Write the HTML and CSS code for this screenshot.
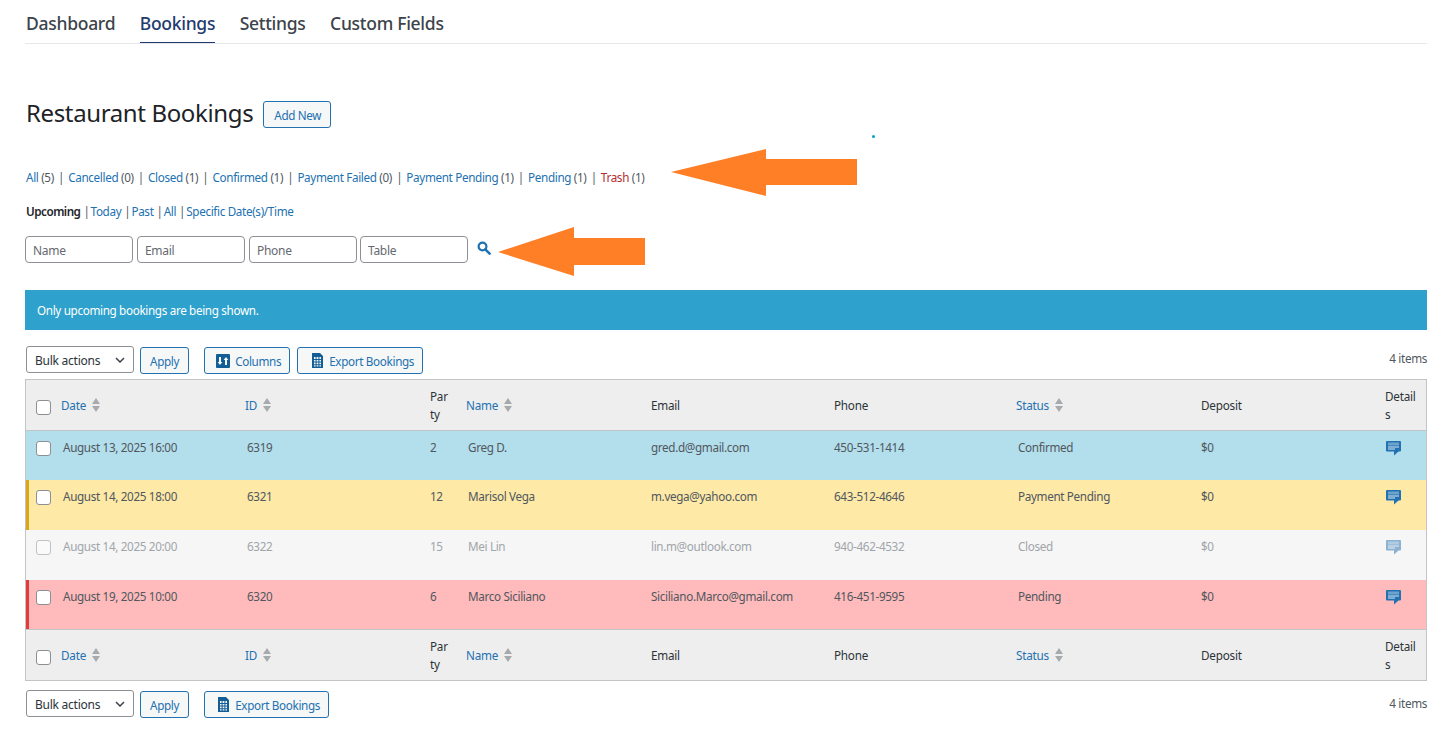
FILE: index.html
```html
<!DOCTYPE html>
<html lang="en">
  <head>
    <meta charset="UTF-8" />
    <title>Restaurant Bookings</title>
    <link rel="stylesheet" href="styles.css">
  </head>
  <body>
    <svg width="0" height="0" class="defs">
      <symbol id="ico-search" viewBox="0 0 14 14">
        <circle cx="5.500" cy="5.500" r="3.900" fill="none" stroke="currentColor" stroke-width="2.200" />
        <path d="M8.300 8.300 12.600 12.600" stroke="currentColor" stroke-width="2.600" stroke-linecap="round" />
      </symbol>
      <symbol id="ico-columns" viewBox="0 0 14 14">
        <path fill="currentColor" fill-rule="evenodd" d="M1 0h12a1 1 0 0 1 1 1v12a1 1 0 0 1-1 1H1a1 1 0 0 1-1-1V1a1 1 0 0 1 1-1zM3 3v5H1.600L4 11l2.400-3H5V3zM9 11h2V6h1.400L10 3 7.600 6H9z" />
      </symbol>
      <symbol id="ico-sheet" viewBox="0 0 13 15">
        <path fill="currentColor" fill-rule="evenodd" d="M1 0h8l3 3v12H1zM3 4v2h1.600V4zM5.600 4v2h1.800V4zM8.400 4v2H10V4zM3 7v1.600h1.600V7zM5.600 7v1.600h1.800V7zM8.400 7v1.600H10V7zM3 9.600v1.600h1.600V9.600zM5.600 9.600v1.600h1.800V9.600zM8.400 9.600v1.600H10V9.600zM3 12.200v1.200h1.600v-1.200zM5.600 12.200v1.200h1.800v-1.200zM8.400 12.200v1.200H10v-1.200z" />
      </symbol>
      <symbol id="ico-comment" viewBox="0 0 15 15">
        <path fill="currentColor" d="M1 0h13a1 1 0 0 1 1 1v8.500a1 1 0 0 1-1 1h-1.500L8 14.500v-4H1a1 1 0 0 1-1-1V1a1 1 0 0 1 1-1z" />
        <path fill="#fff" fill-opacity=".35" d="M2 1.500h11v3H2z" />
        <path fill="#fff" fill-opacity=".85" d="M2 5.500h11v1H2zM2 7.500h7v1H2z" />
      </symbol>
    </svg>

    <nav class="tabs">
      <a href="#">Dashboard</a>
      <a href="#" class="active">Bookings</a>
      <a href="#">Settings</a>
      <a href="#">Custom Fields</a>
    </nav>

    <div class="title-row">
      <h1>Restaurant Bookings</h1>
      <a href="#" class="btn add-new">Add New</a>
    </div>

    <ul class="status-links">
      <li><a href="#">All</a> (5)</li>
      <li><a href="#">Cancelled</a> (0)</li>
      <li><a href="#">Closed</a> (1)</li>
      <li><a href="#">Confirmed</a> (1)</li>
      <li><a href="#">Payment Failed</a> (0)</li>
      <li><a href="#">Payment Pending</a> (1)</li>
      <li><a href="#">Pending</a> (1)</li>
      <li><a href="#" class="trash">Trash</a> (1)</li>
    </ul>

    <ul class="date-links">
      <li><b>Upcoming</b></li>
      <li><a href="#">Today</a></li>
      <li><a href="#">Past</a></li>
      <li><a href="#">All</a></li>
      <li><a href="#">Specific Date(s)/Time</a></li>
    </ul>

    <form class="search-row">
      <input type="text" placeholder="Name" />
      <input type="text" placeholder="Email" />
      <input type="text" placeholder="Phone" />
      <input type="text" placeholder="Table" class="table-input" />
      <svg class="search-icon"><use href="#ico-search" /></svg>
    </form>

    <div class="notice">Only upcoming bookings are being shown.</div>

    <div class="tablenav top">
      <select class="bulk"><option>Bulk actions</option></select>
      <button type="button" class="btn apply">Apply</button>
      <button type="button" class="btn columns"><svg class="ico"><use href="#ico-columns" /></svg>Columns</button>
      <button type="button" class="btn export"><svg class="ico sheet"><use href="#ico-sheet" /></svg>Export Bookings</button>
      <span class="count">4 items</span>
    </div>

    <table class="bookings">
      <colgroup>
        <col class="c-check" /><col class="c-date" /><col class="c-id" /><col class="c-party" /><col class="c-name" />
        <col class="c-email" /><col class="c-phone" /><col class="c-status" /><col class="c-deposit" /><col class="c-details" />
      </colgroup>
      <thead>
        <tr>
          <th class="check"><input type="checkbox" /></th>
          <th><a href="#">Date</a><span class="sort"></span></th>
          <th><a href="#">ID</a><span class="sort"></span></th>
          <th>Party</th>
          <th><a href="#">Name</a><span class="sort"></span></th>
          <th>Email</th>
          <th>Phone</th>
          <th><a href="#">Status</a><span class="sort"></span></th>
          <th>Deposit</th>
          <th>Details</th>
        </tr>
      </thead>
      <tbody>
        <tr class="confirmed">
          <td class="check"><input type="checkbox" /></td>
          <td>August 13, 2025 16:00</td><td>6319</td><td>2</td><td>Greg D.</td><td>gred.d@gmail.com</td>
          <td>450-531-1414</td><td>Confirmed</td><td>$0</td>
          <td><svg class="comment"><use href="#ico-comment" /></svg></td>
        </tr>
        <tr class="payment-pending">
          <td class="check"><input type="checkbox" /></td>
          <td>August 14, 2025 18:00</td><td>6321</td><td>12</td><td>Marisol Vega</td><td>m.vega@yahoo.com</td>
          <td>643-512-4646</td><td>Payment Pending</td><td>$0</td>
          <td><svg class="comment"><use href="#ico-comment" /></svg></td>
        </tr>
        <tr class="closed">
          <td class="check"><input type="checkbox" /></td>
          <td>August 14, 2025 20:00</td><td>6322</td><td>15</td><td>Mei Lin</td><td>lin.m@outlook.com</td>
          <td>940-462-4532</td><td>Closed</td><td>$0</td>
          <td><svg class="comment"><use href="#ico-comment" /></svg></td>
        </tr>
        <tr class="pending">
          <td class="check"><input type="checkbox" /></td>
          <td>August 19, 2025 10:00</td><td>6320</td><td>6</td><td>Marco Siciliano</td><td>Siciliano.Marco@gmail.com</td>
          <td>416-451-9595</td><td>Pending</td><td>$0</td>
          <td><svg class="comment"><use href="#ico-comment" /></svg></td>
        </tr>
      </tbody>
      <tfoot>
        <tr>
          <th class="check"><input type="checkbox" /></th>
          <th><a href="#">Date</a><span class="sort"></span></th>
          <th><a href="#">ID</a><span class="sort"></span></th>
          <th>Party</th>
          <th><a href="#">Name</a><span class="sort"></span></th>
          <th>Email</th>
          <th>Phone</th>
          <th><a href="#">Status</a><span class="sort"></span></th>
          <th>Deposit</th>
          <th>Details</th>
        </tr>
      </tfoot>
    </table>

    <div class="tablenav bottom">
      <select class="bulk"><option>Bulk actions</option></select>
      <button type="button" class="btn apply">Apply</button>
      <button type="button" class="btn export-bottom"><svg class="ico sheet"><use href="#ico-sheet" /></svg>Export Bookings</button>
      <span class="count">4 items</span>
    </div>

    <!-- Annotations drawn over the screenshot -->
    <svg class="arrow arrow-one" width="186" height="47" viewBox="0 0 186 47"><path d="M0 23 95 0V10H186V36H95V47z" /></svg>
    <svg class="arrow arrow-two" width="147" height="49" viewBox="0 0 147 49"><path d="M0 25 76 0V11H147V38H76V49z" /></svg>
    <span class="dot"></span>
  </body>
</html>
```

FILE: styles.css
```css
html,
body {
  margin: 0;
  background-color: #fff;
}

body {
  position: relative;
  height: 736px;
  overflow: hidden;
  padding: 0 26px 0 25px;
  box-sizing: border-box;
  font-family: "Noto Sans", "Open Sans", sans-serif;
  font-size: 11.700px;
  letter-spacing: -0.340px;
  color: #50575e;
}

a {
  color: #2271b1;
  text-decoration: none;
}

.defs {
  position: absolute;
}

/* Top tabs */
.tabs {
  display: flex;
  gap: 24.500px;
  height: 43px;
  padding-left: 1px;
  border-bottom: 1px solid #e5e7eb;
}

.tabs a {
  color: #3c434a;
  font-size: 17.500px;
  font-weight: 500;
  line-height: 47px;
  height: 42px;
  letter-spacing: -0.280px;
}

.tabs a.active {
  color: #1e3a6e;
  height: 42px;
  border-bottom: 1px solid #1e3a6e;
}

/* Title */
.title-row {
  display: flex;
  align-items: center;
  gap: 10px;
  margin-top: 57px;
  height: 27px;
}

h1 {
  margin: -4px 0 0 1px;
  font-size: 24px;
  font-weight: 400;
  color: #1d2327;
  letter-spacing: -0.370px;
}

.btn {
  display: inline-flex;
  align-items: center;
  box-sizing: border-box;
  height: 27px;
  padding: 0 9px;
  background-color: #f6f7f7;
  border: 1px solid #2271b1;
  border-radius: 3px;
  color: #2271b1;
  font-family: inherit;
  font-size: 11.700px;
  letter-spacing: -0.340px;
}

/* Filter links */
.status-links,
.date-links {
  display: flex;
  list-style: none;
  margin: 0;
  padding: 0 0 0 1px;
}

.status-links {
  margin-top: 40px;
  height: 18px;
  line-height: 18px;
}

.status-links li + li::before {
  content: "|";
  margin: 0 4.100px;
}

.status-links .trash {
  color: #b32d2e;
}

.date-links {
  margin-top: 16px;
  height: 18px;
  line-height: 18px;
}

.date-links b {
  color: #1d2327;
  font-weight: 600;
  letter-spacing: -0.500px;
}

.date-links li + li::before {
  content: "|";
  margin: 0 1px 0 3px;
}

/* Search */
.search-row {
  display: flex;
  align-items: center;
  gap: 4px;
  margin-top: 16px;
}

.search-row input {
  box-sizing: border-box;
  width: 108px;
  height: 27px;
  padding: 1px 7px 0;
  border: 1px solid #8c8f94;
  border-radius: 4px;
  font-family: inherit;
  font-size: 12px;
  letter-spacing: -0.300px;
}

.search-row input::placeholder {
  color: #646970;
}

.search-row .table-input {
  margin-left: -1px;
}

.search-icon {
  width: 14px;
  height: 14px;
  margin: 0 0 4px 5px;
  color: #2271b1;
}

/* Blue notice */
.notice {
  margin-top: 27px;
  height: 40px;
  padding-left: 12px;
  line-height: 41px;
  background-color: #2ea2cc;
  color: #fff;
}

/* Table nav */
.tablenav {
  display: flex;
  align-items: center;
  height: 27px;
}

.tablenav.top {
  margin-top: 17px;
}

.tablenav.bottom {
  margin-top: 10px;
}

.bulk {
  box-sizing: border-box;
  width: 108px;
  height: 27px;
  margin: 0 0 2px 1px;
  padding: 1px 8px 0;
  appearance: none;
  background: #fff url("data:image/svg+xml,%3Csvg xmlns='http://www.w3.org/2000/svg' width='10' height='6'%3E%3Cpath d='M1 1l4 4 4-4' fill='none' stroke='%233c434a' stroke-width='1.500'/%3E%3C/svg%3E") no-repeat right 8px center;
  border: 1px solid #8c8f94;
  border-radius: 3px;
  color: #2c3338;
  font-family: inherit;
  font-size: 12px;
  letter-spacing: -0.250px;
}

.add-new {
  padding: 0 9px 0 10px;
}

.apply {
  margin-left: 6px;
  padding: 0 9px;
}

.columns {
  margin-left: 15px;
  padding: 0 8px 0 11px;
}

.export {
  margin-left: 7px;
  padding: 0 8px 0 13px;
}

.export-bottom {
  margin-left: 15px;
  padding: 0 8px 0 12px;
}

.ico {
  width: 14px;
  height: 14px;
  margin-right: 5px;
  color: #135e96;
}

.ico.sheet {
  width: 13px;
  height: 15px;
  margin-right: 5px;
}

.count {
  margin-left: auto;
  line-height: 22px;
  align-self: flex-start;
}

.bottom .count {
  line-height: 24px;
}

/* Bookings table */
.bookings {
  width: 1402px;
  margin-top: 5px;
  table-layout: fixed;
  border-collapse: separate;
  border-spacing: 0;
  border: 1px solid #c3c4c7;
}

.c-check { width: 27px; }
.c-date { width: 184px; }
.c-id { width: 185px; }
.c-party { width: 36px; }
.c-name { width: 185px; }
.c-email { width: 183px; }
.c-phone { width: 182px; }
.c-status { width: 185px; }
.c-deposit { width: 184px; }
.c-details { width: 49px; }

th {
  height: 51px;
  padding: 0 8px;
  box-sizing: border-box;
  background-color: #eee;
  color: #2c3338;
  font-weight: 400;
  text-align: left;
  word-break: break-all;
  line-height: 18px;
  letter-spacing: -0.220px;
}

thead th {
  border-bottom: 1px solid #c3c4c7;
}

tfoot th {
  border-top: 1px solid #c3c4c7;
}

td {
  height: 50px;
  padding: 7px 10px 0 10px;
  box-sizing: border-box;
  vertical-align: top;
  line-height: 18px;
}

tr.confirmed td,
tr.pending td {
  height: 49px;
}

td:nth-child(4),
td:nth-child(6),
td:nth-child(7),
td:nth-child(9),
td:nth-child(10) {
  padding-left: 8px;
}

.check {
  padding: 0 0 0 10px;
}

td.check {
  padding: 10px 0 0 10px;
}

input[type="checkbox"] {
  appearance: none;
  display: block;
  width: 15px;
  height: 15px;
  margin: 0;
  background-color: #fff;
  border: 1px solid #8c8f94;
  border-radius: 3px;
}

th input[type="checkbox"] {
  margin-top: 4px;
}

/* Sort arrows, two triangles */
.sort {
  display: inline-block;
  vertical-align: -2px;
  margin-left: 6px;
  width: 9px;
  height: 14px;
  position: relative;
}

.sort::before,
.sort::after {
  content: "";
  position: absolute;
  left: 0;
  border-left: 4.500px solid transparent;
  border-right: 4.500px solid transparent;
}

.sort::before {
  top: 0;
  border-bottom: 6px solid #a7aaad;
}

.sort::after {
  bottom: 0;
  border-top: 6px solid #a7aaad;
}

tr.confirmed td { background-color: #b3deec; }
tr.payment-pending td { background-color: #fee9a6; }
tr.closed td { background-color: #f6f6f6; }
tr.pending td { background-color: #ffbbbb; }

tr.payment-pending td:first-child { box-shadow: inset 3px 0 0 #dba617; }
tr.pending td:first-child { box-shadow: inset 3px 0 0 #e03c3c; }

tr.closed td {
  color: #a0a5aa;
}

tr.closed input,
tr.closed .comment {
  opacity: 0.500;
}

.comment {
  display: block;
  width: 15px;
  height: 15px;
  margin: 3px 0 0 1px;
  color: #2271b1;
}

/* Annotation shapes */
.arrow {
  position: absolute;
  fill: #ff7f27;
}

.arrow-one {
  left: 671px;
  top: 149px;
}

.arrow-two {
  left: 498px;
  top: 227px;
}

.dot {
  position: absolute;
  left: 872px;
  top: 135px;
  width: 3px;
  height: 3px;
  border-radius: 50%;
  background-color: #00a0d2;
}
```
